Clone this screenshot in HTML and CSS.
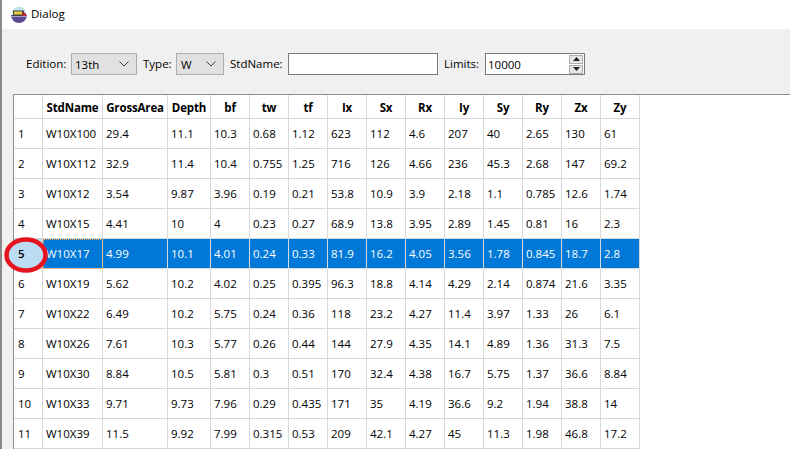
FILE: index.html
```html
<!DOCTYPE html>
<html lang="en">
<head>
<meta charset="utf-8">
<title>Dialog</title>
<link rel="stylesheet" href="styles.css">
</head>
<body>
<div class="window">
  <header class="titlebar">
    <svg class="app-icon" width="18" height="17" viewBox="0 0 18 17">
      <path d="M1 9a8 8 0 0 0 16 0z" fill="#5b4a96"/>
      <path d="M2 7a7 6.5 0 0 1 14 0z" fill="#bfe3e6"/>
      <rect x="3" y="4.5" width="11" height="5.5" fill="#4a4438"/>
      <rect x="4" y="5.5" width="8" height="3" fill="#e8cf45"/>
      <rect x="12.5" y="7" width="3.5" height="3.5" fill="#cc2238"/>
      <path d="M1 10.5h16" stroke="#a79fc8" stroke-width="1"/>
    </svg>
    <span class="title-text">Dialog</span>
  </header>
  <div class="toolbar">
    <label class="lbl">Edition:</label>
    <div class="combo combo-edition"><span>13th</span><svg class="chev" width="10" height="6" viewBox="0 0 10 6"><path d="M0.5 0.5L5 5L9.5 0.5" fill="none" stroke="#444" stroke-width="1"/></svg></div>
    <label class="lbl">Type:</label>
    <div class="combo combo-type"><span>W</span><svg class="chev" width="10" height="6" viewBox="0 0 10 6"><path d="M0.5 0.5L5 5L9.5 0.5" fill="none" stroke="#444" stroke-width="1"/></svg></div>
    <label class="lbl lbl-name">StdName:</label>
    <div class="field field-name"></div>
    <label class="lbl lbl-limits">Limits:</label>
    <div class="field field-limits"><span>10000</span>
      <div class="spin">
        <div class="spin-btn"><svg width="7" height="4" viewBox="0 0 7 4"><path d="M3.5 0L7 4H0z" fill="#222"/></svg></div>
        <div class="spin-btn"><svg width="7" height="4" viewBox="0 0 7 4"><path d="M0 0H7L3.5 4z" fill="#222"/></svg></div>
      </div>
    </div>
  </div>
  <div class="tableframe">
    <table class="grid">
      <thead>
        <tr><th class="corner"></th><th class="c1">StdName</th><th class="c2">GrossArea</th><th class="c3">Depth</th><th class="c4">bf</th><th class="c5">tw</th><th class="c5">tf</th><th class="c5">Ix</th><th class="c5">Sx</th><th class="c5">Rx</th><th class="c5">Iy</th><th class="c5">Sy</th><th class="c5">Ry</th><th class="c5">Zx</th><th class="c5">Zy</th></tr>
      </thead>
      <tbody>
        <tr><th>1</th><td>W10X100</td><td>29.4</td><td>11.1</td><td>10.3</td><td>0.68</td><td>1.12</td><td>623</td><td>112</td><td>4.6</td><td>207</td><td>40</td><td>2.65</td><td>130</td><td>61</td></tr>
        <tr><th>2</th><td>W10X112</td><td>32.9</td><td>11.4</td><td>10.4</td><td>0.755</td><td>1.25</td><td>716</td><td>126</td><td>4.66</td><td>236</td><td>45.3</td><td>2.68</td><td>147</td><td>69.2</td></tr>
        <tr><th>3</th><td>W10X12</td><td>3.54</td><td>9.87</td><td>3.96</td><td>0.19</td><td>0.21</td><td>53.8</td><td>10.9</td><td>3.9</td><td>2.18</td><td>1.1</td><td>0.785</td><td>12.6</td><td>1.74</td></tr>
        <tr><th>4</th><td>W10X15</td><td>4.41</td><td>10</td><td>4</td><td>0.23</td><td>0.27</td><td>68.9</td><td>13.8</td><td>3.95</td><td>2.89</td><td>1.45</td><td>0.81</td><td>16</td><td>2.3</td></tr>
        <tr class="selected"><th><span class="row-no">5</span></th><td class="current">W10X17</td><td>4.99</td><td>10.1</td><td>4.01</td><td>0.24</td><td>0.33</td><td>81.9</td><td>16.2</td><td>4.05</td><td>3.56</td><td>1.78</td><td>0.845</td><td>18.7</td><td>2.8</td></tr>
        <tr><th>6</th><td>W10X19</td><td>5.62</td><td>10.2</td><td>4.02</td><td>0.25</td><td>0.395</td><td>96.3</td><td>18.8</td><td>4.14</td><td>4.29</td><td>2.14</td><td>0.874</td><td>21.6</td><td>3.35</td></tr>
        <tr><th>7</th><td>W10X22</td><td>6.49</td><td>10.2</td><td>5.75</td><td>0.24</td><td>0.36</td><td>118</td><td>23.2</td><td>4.27</td><td>11.4</td><td>3.97</td><td>1.33</td><td>26</td><td>6.1</td></tr>
        <tr><th>8</th><td>W10X26</td><td>7.61</td><td>10.3</td><td>5.77</td><td>0.26</td><td>0.44</td><td>144</td><td>27.9</td><td>4.35</td><td>14.1</td><td>4.89</td><td>1.36</td><td>31.3</td><td>7.5</td></tr>
        <tr><th>9</th><td>W10X30</td><td>8.84</td><td>10.5</td><td>5.81</td><td>0.3</td><td>0.51</td><td>170</td><td>32.4</td><td>4.38</td><td>16.7</td><td>5.75</td><td>1.37</td><td>36.6</td><td>8.84</td></tr>
        <tr><th>10</th><td>W10X33</td><td>9.71</td><td>9.73</td><td>7.96</td><td>0.29</td><td>0.435</td><td>171</td><td>35</td><td>4.19</td><td>36.6</td><td>9.2</td><td>1.94</td><td>38.8</td><td>14</td></tr>
        <tr><th>11</th><td>W10X39</td><td>11.5</td><td>9.92</td><td>7.99</td><td>0.315</td><td>0.53</td><td>209</td><td>42.1</td><td>4.27</td><td>45</td><td>11.3</td><td>1.98</td><td>46.8</td><td>17.2</td></tr>
      </tbody>
    </table>
  </div>
  <svg class="marker" width="48" height="40" viewBox="0 0 48 40"><ellipse cx="24" cy="20" rx="19.5" ry="15.5" fill="#bcdcf4" stroke="#e5141f" stroke-width="4.5"/></svg>
</div>
</body>
</html>
```
FILE: styles.css
```css
html, body { margin: 0; padding: 0; }
body { width: 790px; height: 449px; overflow: hidden; font-family: "Open Sans", "Noto Sans", sans-serif; font-size: 11.5px; color: #000; background: #fff; }
.window { position: relative; width: 790px; height: 449px; overflow: hidden; background: #f0f0f0; border-left: 2px solid #8a8a8a; box-sizing: border-box; display: flex; flex-direction: column; }
.titlebar { height: 29px; flex: none; background: #fff; display: flex; align-items: center; gap: 3px; padding-left: 8px; font-size: 11.5px; }
.title-text { padding-bottom: 2px; }
.toolbar { height: 65px; flex: none; box-sizing: border-box; padding: 24px 0 0 24px; display: flex; align-items: flex-start; }
.lbl { line-height: 22px; width: 45px; flex: none; }
.combo { height: 22px; box-sizing: border-box; background: #e1e1e1; border: 1px solid #adadad; display: flex; align-items: center; justify-content: space-between; padding: 0 7px 0 3px; }
.combo-edition { width: 66px; margin-right: 6px; }
.combo-type { width: 48px; margin-right: 6px; margin-left: -12px; padding-left: 4px; }
.lbl-name { width: 58px; }
.lbl-limits { width: 41px; margin-left: 6px; }
.field { height: 22px; box-sizing: border-box; background: #fff; border: 1px solid #7a7a7a; }
.field-name { width: 150px; }
.field-limits { width: 100px; display: flex; align-items: center; justify-content: space-between; padding-left: 2px; }
.spin { display: flex; flex-direction: column; gap: 1px; margin-right: 1px; }
.spin-btn { width: 14px; height: 9px; box-sizing: border-box; background: #e6e6e6; border: 1px solid #adadad; display: flex; align-items: center; justify-content: center; }
.tableframe { flex: 1; margin-left: 11px; background: #fff; border-top: 1px solid #8f8f8f; border-left: 1px solid #8f8f8f; overflow: hidden; }
.grid { border-collapse: separate; border-spacing: 0; table-layout: fixed; width: 626px; }
.grid th, .grid td { box-sizing: border-box; height: 30px; padding: 0 0 0 3px; border-right: 1px solid #d8d8d8; border-bottom: 1px solid #d8d8d8; text-align: left; font-weight: 400; white-space: nowrap; overflow: hidden; }
.grid thead th { height: 24px; font-weight: 700; text-align: center; padding: 1px 0 0; letter-spacing: -0.15px; }
.grid tbody th { padding-left: 4px; }
.corner { width: 29px; }
.c1 { width: 60px; }
.c2 { width: 65px; }
.c3 { width: 43px; }
.c4 { width: 39px; }
.c5 { width: 39px; }
.selected td { background: #0078d7; color: #fff; }
.selected th { background: #bcdcf4; }
.selected td.current { outline: 1px dotted #f6a54a; outline-offset: -1px; }
.row-no { position: relative; z-index: 2; font-weight: 600; }
.marker { position: absolute; left: 0; top: 235px; z-index: 1; }
```
